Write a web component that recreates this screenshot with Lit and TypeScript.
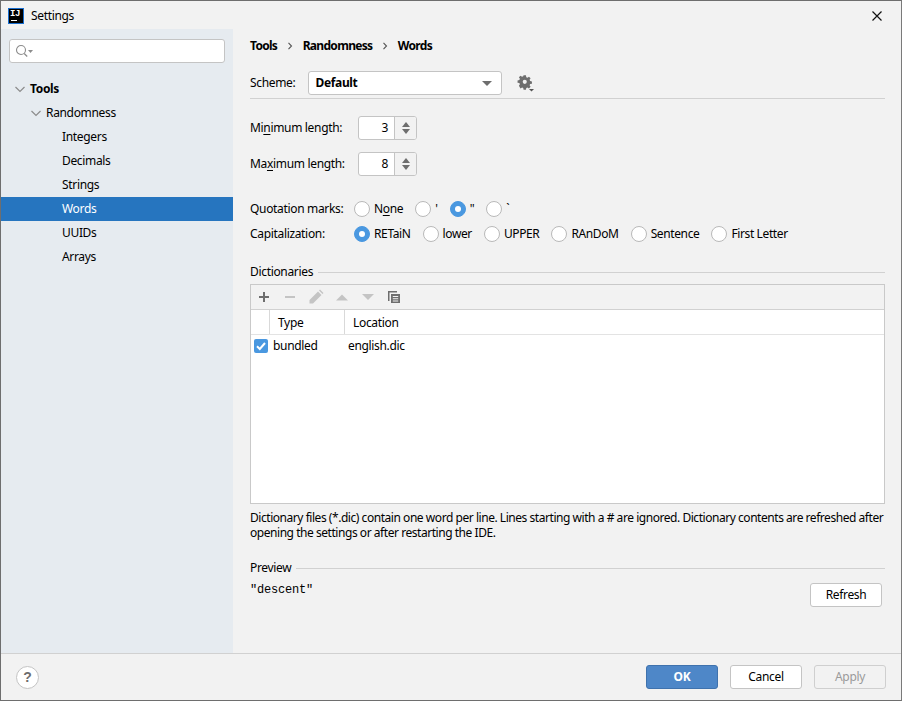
import { LitElement, html, css } from "lit";
import { customElement } from "lit/decorators.js";

const chevron = html`<svg width="12" height="12" viewBox="0 0 12 12"><path d="M1.500 4l4.500 4.500L10.500 4" fill="none" stroke="#8c8c8c" stroke-width="1.200"/></svg>`;
const crumbSep = html`<svg class="sep" width="6" height="8" viewBox="0 0 6 8"><path d="M1.500 .8L4.500 4L1.500 7.200" fill="none" stroke="#555" stroke-width="1.100"/></svg>`;

@customElement("app-root")
export class AppRoot extends LitElement {
  static styles = css`
    :host { display: block; width: 902px; height: 701px; font: 12px/16px "Noto Sans", "Open Sans", sans-serif; color: #000; letter-spacing: -0.33px; }
    * { box-sizing: border-box; }
    .win { width: 902px; height: 701px; border: 1px solid #6e6e6e; border-right-color: #7a7a7a; background: #f2f2f2; display: flex; flex-direction: column; overflow: hidden; }
    .title { height: 28px; flex: none; display: flex; align-items: center; padding: 1px 0 0 7px; background: #f2f2f2; }
    .title .txt { margin-left: 7px; }
    .logo { width: 16px; height: 16px; background: #000; border: 1px solid #1a6fd0; position: relative; flex: none; color: #fff; font: bold 9px/10px "Liberation Mono", monospace; padding-left: 1px; letter-spacing: -0.5px; }
    .logo i { position: absolute; left: 2px; bottom: 2px; width: 6px; height: 1px; background: #fff; }
    .close { margin-left: auto; margin-right: 18px; display: block; }
    .body { flex: 1; display: flex; min-height: 0; }
    .side { width: 232px; flex: none; background: #e6ebf0; padding-top: 10px; }
    .search { margin: 0 8px; width: 216px; height: 24px; background: #fff; border: 1px solid #c4c4c4; border-radius: 3px; display: flex; align-items: center; padding-left: 5px; }
    .tree { margin-top: 14px; }
    .node { height: 24px; display: flex; align-items: center; white-space: nowrap; }
    .node.l0 { padding-left: 13px; font-weight: 700; }
    .node.l1 { padding-left: 29px; }
    .node.l2 { padding-left: 61px; }
    .node svg { margin-right: 4px; }
    .node.sel { background: #2675bf; color: #fff; }
    .main { flex: 1; padding: 9px 16px 0 17px; min-width: 0; }
    .crumbs { height: 16px; display: flex; align-items: center; font-weight: 700; letter-spacing: -0.7px; }
    .crumbs .sep { margin: 0 10px 0 9.500px; }
    .scheme { margin-top: 17px; display: flex; align-items: center; height: 24px; }
    .combo { margin-left: 13px; width: 194px; height: 24px; background: #fff; border: 1px solid #c4c4c4; border-radius: 3px; display: flex; align-items: center; padding: 0 5px 0 6px; font-weight: 700; justify-content: space-between; }
    .caret { width: 0; height: 0; border-left: 5px solid transparent; border-right: 5px solid transparent; border-top: 5px solid #6e6e6e; margin-right: 4px; }
    .gear { margin-left: 15px; }
    .rule { height: 1px; background: #d1d1d1; margin-top: 3px; }
    .spinrow { display: flex; align-items: center; height: 24px; }
    .spinrow.a { margin-top: 17px; }
    .spinrow.b { margin-top: 12px; }
    .spinrow label { width: 108px; }
    .spin { width: 59px; height: 24px; background: #fff; border: 1px solid #c4c4c4; border-radius: 3px; display: flex; }
    .spin .v { width: 35px; text-align: right; padding-right: 6px; line-height: 22px; }
    .spin .b { flex: 1; background: #f2f2f2; border-left: 1px solid #c4c4c4; border-radius: 0 2px 2px 0; display: flex; flex-direction: column; align-items: center; justify-content: center; gap: 2px; }
    .up { width: 0; height: 0; border-left: 4.500px solid transparent; border-right: 4.500px solid transparent; border-bottom: 5px solid #6e6e6e; }
    .dn { width: 0; height: 0; border-left: 4.500px solid transparent; border-right: 4.500px solid transparent; border-top: 5px solid #6e6e6e; }
    u { text-underline-offset: 2px; text-decoration-thickness: 1px; }
    .radios { display: flex; align-items: center; height: 20px; white-space: nowrap; }
    .radios.quo { margin-top: 23px; }
    .radios.cap { margin-top: 5px; }
    .radios.cap .r { letter-spacing: -0.38px; }
    .radios .lab { width: 104px; flex: none; }
    .r { display: flex; align-items: center; margin-right: 12px; }
    .dot { width: 16px; height: 16px; border-radius: 50%; background: #fff; border: 1px solid #b9b9b9; margin-right: 4px; flex: none; }
    .dot.on { background: #4a98e0; border-color: #4a98e0; position: relative; }
    .dot.on::after { content: ""; position: absolute; left: 4px; top: 4px; width: 6px; height: 6px; border-radius: 50%; background: #fff; }
    .group { display: flex; align-items: center; height: 16px; }
    .group::after { content: ""; flex: 1; height: 1px; background: #d1d1d1; margin-left: 5px; }
    .dict { margin-top: 20px; }
    .table { margin-top: 4px; height: 220px; border: 1px solid #c9c9c9; background: #fff; display: flex; flex-direction: column; }
    .tb { height: 25px; background: #f2f2f2; border-bottom: 1px solid #d1d1d1; display: flex; align-items: center; padding-left: 5px; gap: 10px; flex: none; }
    .tb svg { display: block; flex: none; }
    .th { height: 25px; flex: none; border-bottom: 1px solid #e3e3e3; display: flex; }
    .th div { height: 24px; line-height: 26px; border-left: 1px solid #d9d9d9; padding-left: 8px; }
    .th .pad { width: 18px; border: 0; padding: 0; }
    .th .t { width: 75px; }
    .td { height: 22px; display: flex; align-items: center; padding: 0 0 0 3px; }
    .chk { width: 14px; height: 14px; border-radius: 2px; background: #4a98e0; margin-right: 5px; display: block; flex: none; }
    .td .t { width: 75px; }
    .help { margin-top: 6px; line-height: 15px; height: 30px; white-space: nowrap; letter-spacing: -0.455px; }
    .prev { margin-top: 20px; }
    .prevrow { display: flex; justify-content: space-between; align-items: flex-start; padding-right: 3px; }
    .mono { font: 12px/16px "Liberation Mono", monospace; letter-spacing: -0.2px; margin-top: 6px; }
    .btn { width: 72px; height: 24px; background: #fff; border: 1px solid #c4c4c4; border-radius: 3px; text-align: center; line-height: 22px; }
    .prevrow .btn { margin-top: 7px; }
    .foot { height: 47px; flex: none; border-top: 1px solid #d1d1d1; display: flex; align-items: center; padding: 0 15px; background: #f2f2f2; }
    .helpbtn { width: 23px; height: 23px; border-radius: 50%; background: #fff; border: 1px solid #c4c4c4; text-align: center; color: #6e6e6e; font: bold 14px/21px "Liberation Sans", sans-serif; letter-spacing: 0; }
    .spacer { flex: 1; }
    .foot .btn { margin-left: 12px; }
    .ok { background: #4e87c8; border-color: #3f72ad; color: #fff; font-weight: 700; }
    .foot .dis { background: #f2f2f2; border-color: #cfcfcf; color: #9a9a9a; }
  `;
  render() {
    const nodes = ["Integers", "Decimals", "Strings", "Words", "UUIDs", "Arrays"];
    return html`<div class="win">
      <div class="title">
        <div class="logo">IJ<i></i></div><span class="txt">Settings</span>
        <svg class="close" width="12" height="12" viewBox="0 0 12 12"><path d="M1.500 1.500l9 9M10.500 1.500l-9 9" stroke="#111" stroke-width="1.200"/></svg>
      </div>
      <div class="body">
        <div class="side">
          <div class="search">
            <svg width="20" height="14" viewBox="0 0 20 14"><circle cx="6" cy="6" r="4.500" fill="none" stroke="#8c8c8c" stroke-width="1.100"/><path d="M9.200 9.500l3 3" stroke="#8c8c8c" stroke-width="1.300"/><path d="M13 6h5l-2.500 3z" fill="#8c8c8c"/></svg>
          </div>
          <div class="tree">
            <div class="node l0">${chevron}Tools</div>
            <div class="node l1">${chevron}Randomness</div>
            ${nodes.map((n) => html`<div class="node l2 ${n === "Words" ? "sel" : ""}">${n}</div>`)}
          </div>
        </div>
        <div class="main">
          <div class="crumbs">Tools${crumbSep}Randomness${crumbSep}Words</div>
          <div class="scheme">Scheme:
            <div class="combo">Default<span class="caret"></span></div>
            <svg class="gear" width="18" height="18" viewBox="0 0 18 18"><path fill="#6e6e6e" fill-rule="evenodd" d="M6.200 1.500h2.600l.4 2 1.300.6 1.700-1.100 1.800 1.800-1.100 1.700.6 1.300 2 .4v2.600l-2 .4-.6 1.300 1.100 1.700-1.800 1.800-1.700-1.100-1.300.6-.4 2H6.200l-.4-2-1.300-.6-1.700 1.100L1 13.100l1.100-1.700-.6-1.300-2-.4V7.100l2-.4.600-1.300L1 3.700 2.800 1.900l1.700 1.100 1.300-.6zM7.500 6.400a2.300 2.300 0 1 0 0 4.600 2.300 2.300 0 0 0 0-4.600z" transform="translate(1 0) scale(.9)"/><path d="M12 15h5l-2.500 2.500z" fill="#555"/></svg>
          </div>
          <div class="rule"></div>
          <div class="spinrow a"><label>Mi<u>n</u>imum length:</label><div class="spin"><div class="v">3</div><div class="b"><i class="up"></i><i class="dn"></i></div></div></div>
          <div class="spinrow b"><label>Ma<u>x</u>imum length:</label><div class="spin"><div class="v">8</div><div class="b"><i class="up"></i><i class="dn"></i></div></div></div>
          <div class="radios quo">
            <span class="lab">Quotation marks:</span>
            <span class="r"><i class="dot"></i>N<u>o</u>ne</span>
            <span class="r"><i class="dot"></i>'</span>
            <span class="r"><i class="dot on"></i>"</span>
            <span class="r"><i class="dot"></i>\`</span>
          </div>
          <div class="radios cap">
            <span class="lab">Capitalization:</span>
            <span class="r"><i class="dot on"></i>RETaiN</span>
            <span class="r"><i class="dot"></i>lower</span>
            <span class="r"><i class="dot"></i>UPPER</span>
            <span class="r"><i class="dot"></i>RAnDoM</span>
            <span class="r"><i class="dot"></i>Sentence</span>
            <span class="r"><i class="dot"></i>First Letter</span>
          </div>
          <div class="group dict">Dictionaries</div>
          <div class="table">
            <div class="tb">
              <svg width="16" height="16" viewBox="0 0 16 16"><path d="M3 8h10M8 3v10" stroke="#6e6e6e" stroke-width="2"/></svg>
              <svg width="16" height="16" viewBox="0 0 16 16"><path d="M3 8h10" stroke="#c4c4c4" stroke-width="2"/></svg>
              <svg width="16" height="16" viewBox="0 0 16 16"><path d="M1.500 14.500v-3.500L10 2.500l3.500 3.500L5 14.500zM11 1.500l1-1 3.500 3.500-1 1z" fill="#c4c4c4"/></svg>
              <svg width="16" height="16" viewBox="0 0 16 16"><path d="M2 11.500L8 5.500l6 6z" fill="#c4c4c4"/></svg>
              <svg width="16" height="16" viewBox="0 0 16 16"><path d="M2 5L8 11l6-6z" fill="#c4c4c4"/></svg>
              <svg width="16" height="16" viewBox="0 0 16 16"><path fill="#6e6e6e" fill-rule="evenodd" d="M2 2h9v1.500H3.500V12H2zM5 5h9v9H5zm1.800 2v1h5.400V7zm0 2.300v1h5.400v-1zm0 2.200v1h5.400v-1z"/></svg>
            </div>
            <div class="th"><div class="pad"></div><div class="t">Type</div><div>Location</div></div>
            <div class="td">
              <svg class="chk" viewBox="0 0 14 14"><path d="M3 7.200l2.800 2.800L11 4" fill="none" stroke="#fff" stroke-width="2"/></svg>
              <div class="t">bundled</div><div>english.dic</div>
            </div>
          </div>
          <div class="help">Dictionary files (*.dic) contain one word per line. Lines starting with a # are ignored. Dictionary contents are refreshed after<br>opening the settings or after restarting the IDE.</div>
          <div class="group prev">Preview</div>
          <div class="prevrow"><div class="mono">"descent"</div><div class="btn">Refresh</div></div>
        </div>
      </div>
      <div class="foot">
        <div class="helpbtn">?</div>
        <div class="spacer"></div>
        <div class="btn ok">OK</div><div class="btn">Cancel</div><div class="btn dis">Apply</div>
      </div>
    </div>`;
  }
}
